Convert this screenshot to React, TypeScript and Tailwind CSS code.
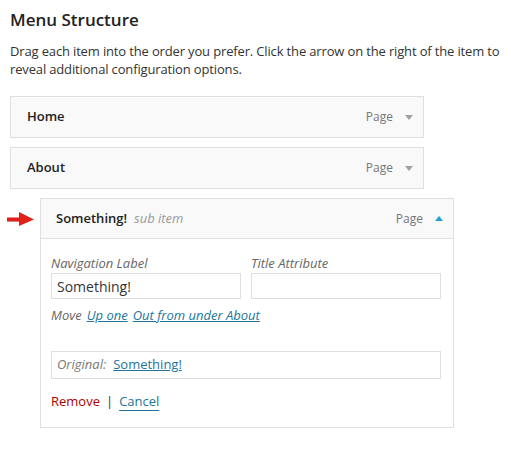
import React from "react";

const font = { fontFamily: '"Open Sans", "Noto Sans", sans-serif' };

function Caret({ up }: { up?: boolean }) {
  return (
    <svg width="8" height="5" viewBox="0 0 8 5" className="ml-[12px]">
      {up ? (
        <polygon points="0,5 8,5 4,0" fill="#21a0d8" />
      ) : (
        <polygon points="0,0 8,0 4,5" fill="#a0a0a0" />
      )}
    </svg>
  );
}

function MenuItem({ title }: { title: string }) {
  return (
    <div className="w-[414px] h-[42px] border border-[#dfdfdf] bg-[#f9f9f9] flex items-center pl-[16px] pr-[10px]">
      <span className="text-[13px] font-semibold text-[#222]">{title}</span>
      <span className="ml-auto text-[12px] text-[#777]">Page</span>
      <Caret />
    </div>
  );
}

export default function App() {
  return (
    <div className="bg-white min-h-screen pl-[10px] pt-2 text-[#333]" style={font}>
      <h2 className="text-[17px] leading-[24px] font-semibold text-[#222]">Menu Structure</h2>
      <p className="mt-[10px] text-[13px] leading-[18px] text-[#333] tracking-[-0.15px]">
        Drag each item into the order you prefer. Click the arrow on the right of the item to reveal additional
        configuration options.
      </p>

      <div className="mt-[18px] flex flex-col gap-[9px]">
        <MenuItem title="Home" />
        <MenuItem title="About" />

        <div className="relative ml-[30px] w-[414px] border border-[#dfdfdf] bg-white">
          <svg width="28" height="15" viewBox="0 0 28 15" className="absolute left-[-34px] top-[13px]">
            <rect x="1" y="6" width="13" height="4" fill="#b0b0b0" opacity="0.35" />
            <rect x="0" y="5.5" width="13" height="4" fill="#e0201a" />
            <polygon points="12,0 27,7.5 12,14" fill="#e0201a" />
          </svg>
          <div className="h-[40px] bg-[#f9f9f9] border-b border-[#dfdfdf] flex items-center pl-[15px] pr-[10px]">
            <span className="text-[13px] font-semibold text-[#222]">Something!</span>
            <span className="ml-[7px] text-[13px] italic text-[#999]">sub item</span>
            <span className="ml-auto text-[12px] text-[#777]">Page</span>
            <Caret up />
          </div>
          <div className="pl-[10px] pr-[12px] pt-[15px] pb-[17px]">
            <div className="flex gap-[10px]">
              <label className="flex flex-col">
                <span className="text-[13px] leading-[19px] italic text-[#666]">Navigation Label</span>
                <div className="w-[190px] h-[26px] border border-[#dfdfdf] bg-white flex items-center px-[5px] text-[14px] text-[#333]">
                  Something!
                </div>
              </label>
              <label className="flex flex-col">
                <span className="text-[13px] leading-[19px] italic text-[#666]">Title Attribute</span>
                <div className="w-[190px] h-[26px] border border-[#dfdfdf] bg-white" />
              </label>
            </div>
            <div className="mt-[7px] text-[13px] leading-[18px]">
              <span className="italic text-[#666]">Move</span>
              <a className="ml-[5px] italic text-[#21759b] underline">Up one</a>
              <a className="ml-[5px] italic text-[#21759b] underline">Out from under About</a>
            </div>
            <div className="mt-[27px] w-[390px] h-[28px] border border-[#dfdfdf] flex items-center pl-[5px] text-[13px]">
              <span className="italic text-[#777]">Original:</span>
              <a className="ml-[7px] text-[#21759b] underline">Something!</a>
            </div>
            <div className="mt-[13px] text-[13px] leading-[18px] flex items-center">
              <a className="text-[#a00]">Remove</a>
              <span className="mx-[6px] text-[#333]">|</span>
              <a className="text-[#21759b] underline underline-offset-4">Cancel</a>
            </div>
          </div>
        </div>
      </div>
    </div>
  );
}
